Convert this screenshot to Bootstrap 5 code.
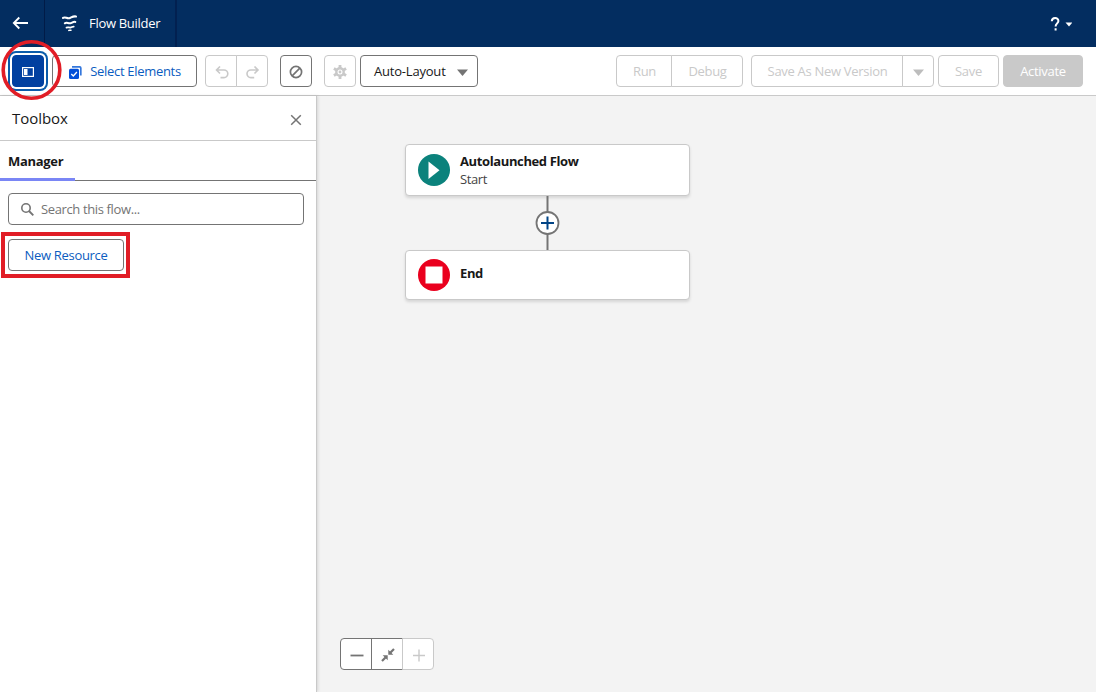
<!DOCTYPE html>
<html lang="en">
<head>
<meta charset="utf-8">
<meta name="viewport" content="width=device-width, initial-scale=1">
<title>Flow Builder</title>
<link href="https://cdn.jsdelivr.net/npm/bootstrap@5.3.0/dist/css/bootstrap.min.css" rel="stylesheet">
<style>
  body { font-family: "Open Sans", "Noto Sans", sans-serif; font-size: 13px; line-height: 18px; letter-spacing: -.3px; color: #181818; }
  svg { display: block; flex: none; }
  .top-nav { height: 47px; background: #032d60; color: #fff; }
  .nav-back { width: 45px; border-right: 1px solid #011b47; padding-left: 12px; padding-bottom: 2px; }
  .nav-title { width: 132px; border-right: 2px solid #022050; padding-left: 16px; padding-bottom: 1px; }
  .nav-name { margin-left: 10px; letter-spacing: -.3px; }
  .toolbar { height: 49px; border-bottom: 1px solid #c9c9c9; padding: 0 13px 0 12px; }
  .btn { --bs-btn-font-size: 13px; --bs-btn-line-height: 18px; --bs-btn-padding-y: 0; --bs-btn-padding-x: 0; --bs-btn-border-radius: 4px; --bs-btn-bg: #fff; --bs-btn-color: #0b5cab; --bs-btn-border-color: #747474; --bs-btn-disabled-bg: #fff; --bs-btn-disabled-color: #c9c9c9; --bs-btn-disabled-border-color: #c9c9c9; --bs-btn-disabled-opacity: 1; height: 32px; display: flex; align-items: center; justify-content: center; flex: none; white-space: nowrap; letter-spacing: inherit; }
  .btn-square { width: 32px; }
  .btn-group > .btn { flex: none; }
  .btn-toggle { --bs-btn-bg: #0140a0; --bs-btn-border-color: #0140a0; box-shadow: 0 0 0 2px #fff, 0 0 0 4px #0b5cab; z-index: 1; }
  .btn-link-blue { --bs-btn-color: #0b5cc0; }
  .btn-activate { --bs-btn-disabled-bg: #c9c9c9; --bs-btn-disabled-color: #fff; }
  .btn-layout { width: 118px; justify-content: space-between; padding: 0 9px 0 13px; color: #181818; letter-spacing: -.2px; }
  .toolbar .btn-group .btn { padding-left: 1px; }
  .toolbox { width: 317px; border-right: 1px solid #c9c9c9; box-shadow: 1px 0 3px rgba(0,0,0,.12); z-index: 1; }
  .toolbox-head { height: 45px; border-bottom: 1px solid #c9c9c9; padding: 0 14px 0 12px; }
  .toolbox-head h1 { font-size: 15px; line-height: 20px; letter-spacing: -.05px; }
  .tab-row { height: 40px; border-bottom: 1px solid #747474; }
  .tab-active { width: 75px; height: 40px; border-bottom: 3px solid #7a86f5; padding: 2px 0 0 8px; }
  .search-box { width: 296px; height: 32px; border: 1px solid #747474; border-radius: 4px; padding-left: 12px; color: #747474; }
  .canvas { background: #f3f3f3; padding-left: 88px; padding-top: 48px; }
  .flow-node { width: 285px; height: 52px; border: 1px solid #c9c9c9; border-radius: 4px; background: #fff; box-shadow: 0 2px 3px rgba(0,0,0,.12); padding-left: 12px; }
  .flow-node-end { height: 50px; }
  .flow-text { margin-left: 10px; letter-spacing: -.38px; }
  .flow-link { width: 285px; height: 54px; }
  .zoom-bar { left: 23px; bottom: 22px; }
  .zoom-bar .btn { padding: 1px 0 0 1px; }
  .ring-mark { left: 0; top: 39px; z-index: 5; pointer-events: none; }
  .box-mark { inset: -7px -6px -7px -7px; border: 4px solid #e11d26; }
</style>
</head>
<body class="vh-100 overflow-hidden d-flex flex-column position-relative">
<nav class="top-nav d-flex align-items-stretch flex-shrink-0">
  <div class="nav-back d-flex align-items-center">
    <svg width="17" height="16" viewBox="0 0 17 16" fill="none" stroke="#fff" stroke-width="1.800"><path d="M1.800 8H16M7.300 2.500 1.800 8l5.500 5.500"/></svg>
  </div>
  <div class="nav-title d-flex align-items-center">
    <svg width="18" height="18" viewBox="0 0 18 18" fill="none" stroke="#fff" stroke-linecap="round"><path d="M2 3.900C4.500 2.200 6 5.300 9 4c2.200-1 3.200-2 6-1.500" stroke-width="2.100"/><path d="M3.800 9.300c2.200-1.400 3.700.8 6.200-.2 1.500-.6 2.400-1.500 4.300-1.200" stroke-width="2"/><path d="M5.500 13.600c1.700-.9 2.700.4 4.500-.2 1-.3 1.500-.9 2.700-.8" stroke-width="1.800"/><path d="M7.800 16.400c.8-.2 1.500.1 2.200-.1" stroke-width="1.500"/></svg>
    <span class="nav-name">Flow Builder</span>
  </div>
  <div class="ms-auto me-4 d-flex align-items-center">
    <svg width="22" height="16" viewBox="0 0 22 16" fill="none" stroke="#fff" stroke-width="2"><path d="M1.800 5.300C1.800.8 8.400.8 8.400 5 8.400 7.400 5.600 7.500 5.600 10.500M5.600 12.300v2.300"/><path d="M15.500 6.500h7l-3.500 4z" fill="#fff" stroke="none"/></svg>
  </div>
</nav>

<div class="toolbar d-flex align-items-center flex-shrink-0 bg-white">
  <button class="btn btn-square btn-toggle position-relative" aria-label="Toggle Toolbox">
    <svg style="margin-top:2px" width="12" height="10" viewBox="0 0 12 10"><rect x=".6" y=".6" width="10.800" height="8.800" fill="none" stroke="#fff" stroke-width="1.200"/><path d="M2 2h3.500v6H2z" fill="#fff"/></svg>
  </button>
  <button class="btn btn-link-blue ms-2" style="width:145px">
    <svg class="me-2 mt-1" width="14" height="14" viewBox="0 0 14 14"><path d="M4 .8h7.500q1.300 0 1.300 1.300v7.500" fill="none" stroke="#3477dc" stroke-width="1.700"/><rect x="1" y="2.700" width="10" height="10.300" rx="1.500" fill="#0250d9"/><path d="m3.300 8 2 2 3.600-4" fill="none" stroke="#fff" stroke-width="1.300"/></svg>
    <span>Select Elements</span>
  </button>
  <div class="btn-group ms-2">
    <button class="btn btn-square" disabled aria-label="Undo"><svg class="mt-1" width="14" height="14" viewBox="0 0 14 14" fill="none" stroke="#c9c9c9" stroke-width="1.600"><path d="M5 .5 1.500 4 5 7.500M1.500 4H9a3.800 3.800 0 0 1 0 7.600H5.500"/></svg></button>
    <button class="btn btn-square" disabled aria-label="Redo"><svg class="mt-1" width="14" height="14" viewBox="0 0 14 14" fill="none" stroke="#c9c9c9" stroke-width="1.600"><path d="M8.500.5 12 4 8.500 7.500M12 4H4.800a3.800 3.800 0 0 0 0 7.600h3.400"/></svg></button>
  </div>
  <button class="btn btn-square" style="margin-left:12px" aria-label="No errors"><svg style="margin-top:1px" width="14" height="14" viewBox="0 0 14 14" fill="none" stroke="#747474" stroke-width="1.700"><circle cx="7" cy="7" r="5.600"/><path d="m3.200 10.800 7.600-7.600"/></svg></button>
  <button class="btn btn-square" disabled style="margin-left:12px" aria-label="Settings"><svg style="margin-top:1px" width="14" height="14" viewBox="0 0 14 14"><circle cx="7" cy="7" r="3.700" fill="none" stroke="#c9c9c9" stroke-width="2.400"/><path d="M7 0v3M7 11v3M.9 3.500l2.600 1.500M10.500 9l2.600 1.500M.9 10.500 3.500 9M10.500 5l2.600-1.500" stroke="#c9c9c9" stroke-width="2.800"/><circle cx="7" cy="7" r="1.400" fill="#c9c9c9"/></svg></button>
  <button class="btn btn-layout ms-1"><span>Auto-Layout</span><svg style="margin-top:2px" width="11" height="7" viewBox="0 0 11 7"><path d="M0 .5h11L5.500 7z" fill="#747474"/></svg></button>

  <div class="btn-group ms-auto">
    <button class="btn" disabled style="width:56px">Run</button>
    <button class="btn" disabled style="width:72px">Debug</button>
  </div>
  <div class="btn-group ms-2">
    <button class="btn" disabled style="width:152px">Save As New Version</button>
    <button class="btn btn-square" disabled aria-label="More"><svg style="margin-top:2px" width="11" height="7" viewBox="0 0 11 7"><path d="M0 .5h11L5.500 7z" fill="#bdbdbd"/></svg></button>
  </div>
  <button class="btn ms-1" disabled style="width:61px">Save</button>
  <button class="btn btn-activate ms-1" disabled style="width:80px">Activate</button>
</div>

<div class="d-flex flex-grow-1">
  <aside class="toolbox bg-white flex-shrink-0 position-relative">
    <div class="toolbox-head d-flex align-items-center justify-content-between">
      <h1 class="m-0 fw-normal">Toolbox</h1>
      <svg class="mt-1" width="12" height="12" viewBox="0 0 12 12" stroke="#747474" stroke-width="1.500"><path d="m1.200 1.200 9.600 9.600M10.800 1.200l-9.600 9.600"/></svg>
    </div>
    <div class="tab-row"><div class="tab-active d-flex align-items-center fw-bold">Manager</div></div>
    <div class="d-flex flex-column align-items-start px-2 pt-2">
      <div class="search-box d-flex align-items-center mt-1">
        <svg width="13" height="13" viewBox="0 0 13 13" fill="none" stroke="#747474" stroke-width="1.600"><circle cx="5" cy="5" r="4.200"/><path d="m8 8 4.300 4.300" stroke-width="1.900"/></svg>
        <span style="margin-left:7px;letter-spacing:-.37px">Search this flow...</span>
      </div>
      <div class="position-relative" style="margin-top:14px">
        <button class="btn btn-link-blue" style="width:116px">New Resource</button>
        <div class="box-mark position-absolute"></div>
      </div>
    </div>
  </aside>
  <main class="canvas flex-grow-1 position-relative">
    <div class="flow-node d-flex align-items-center">
      <svg width="32" height="32" viewBox="0 0 32 32"><circle cx="16" cy="16" r="16" fill="#0b827c"/><path d="M10.500 7.500v17.500l11-8.750z" fill="#fff"/></svg>
      <div class="flow-text"><div class="fw-bold">Autolaunched Flow</div><div style="color:#444">Start</div></div>
    </div>
    <div class="flow-link d-flex justify-content-center">
      <svg width="25" height="54" viewBox="0 0 25 54"><path d="M12.500 0v54" stroke="#747474" stroke-width="2"/><circle cx="12.500" cy="27" r="11" fill="#fff" stroke="#747474" stroke-width="1.800"/><path d="M6 27h13M12.500 20.500v13" stroke="#014486" stroke-width="2"/></svg>
    </div>
    <div class="flow-node flow-node-end d-flex align-items-center">
      <svg width="32" height="32" viewBox="0 0 32 32"><circle cx="16" cy="16" r="16" fill="#ea001e"/><path d="M7.500 7.500h17v17h-17z" fill="#fff"/></svg>
      <div class="flow-text fw-bold pb-1">End</div>
    </div>
    <div class="zoom-bar btn-group position-absolute">
      <button class="btn btn-square" aria-label="Zoom out"><svg width="14" height="14" viewBox="0 0 14 14"><path d="M.5 7.500h13" stroke="#747474" stroke-width="1.800"/></svg></button>
      <button class="btn btn-square" aria-label="Fit"><svg width="14" height="14" viewBox="0 0 14 14" fill="#747474" stroke="#747474"><path d="M7.300 1.800v5h5zM1.700 7.300h5v5z" stroke="none"/><path d="m9 5 4-4M5 9l-4 4" stroke-width="2.200"/></svg></button>
      <button class="btn btn-square" disabled aria-label="Zoom in"><svg width="14" height="14" viewBox="0 0 14 14"><path d="M1 7.500h12M7 1.500v12" stroke="#c9c9c9" stroke-width="1.400"/></svg></button>
    </div>
  </main>
</div>
<svg class="ring-mark position-absolute" width="64" height="64" viewBox="0 0 64 64"><circle cx="31.500" cy="31" r="28.300" fill="none" stroke="#e11d26" stroke-width="3.600"/></svg>
<script src="https://cdn.jsdelivr.net/npm/bootstrap@5.3.0/dist/js/bootstrap.bundle.min.js"></script>
</body>
</html>
